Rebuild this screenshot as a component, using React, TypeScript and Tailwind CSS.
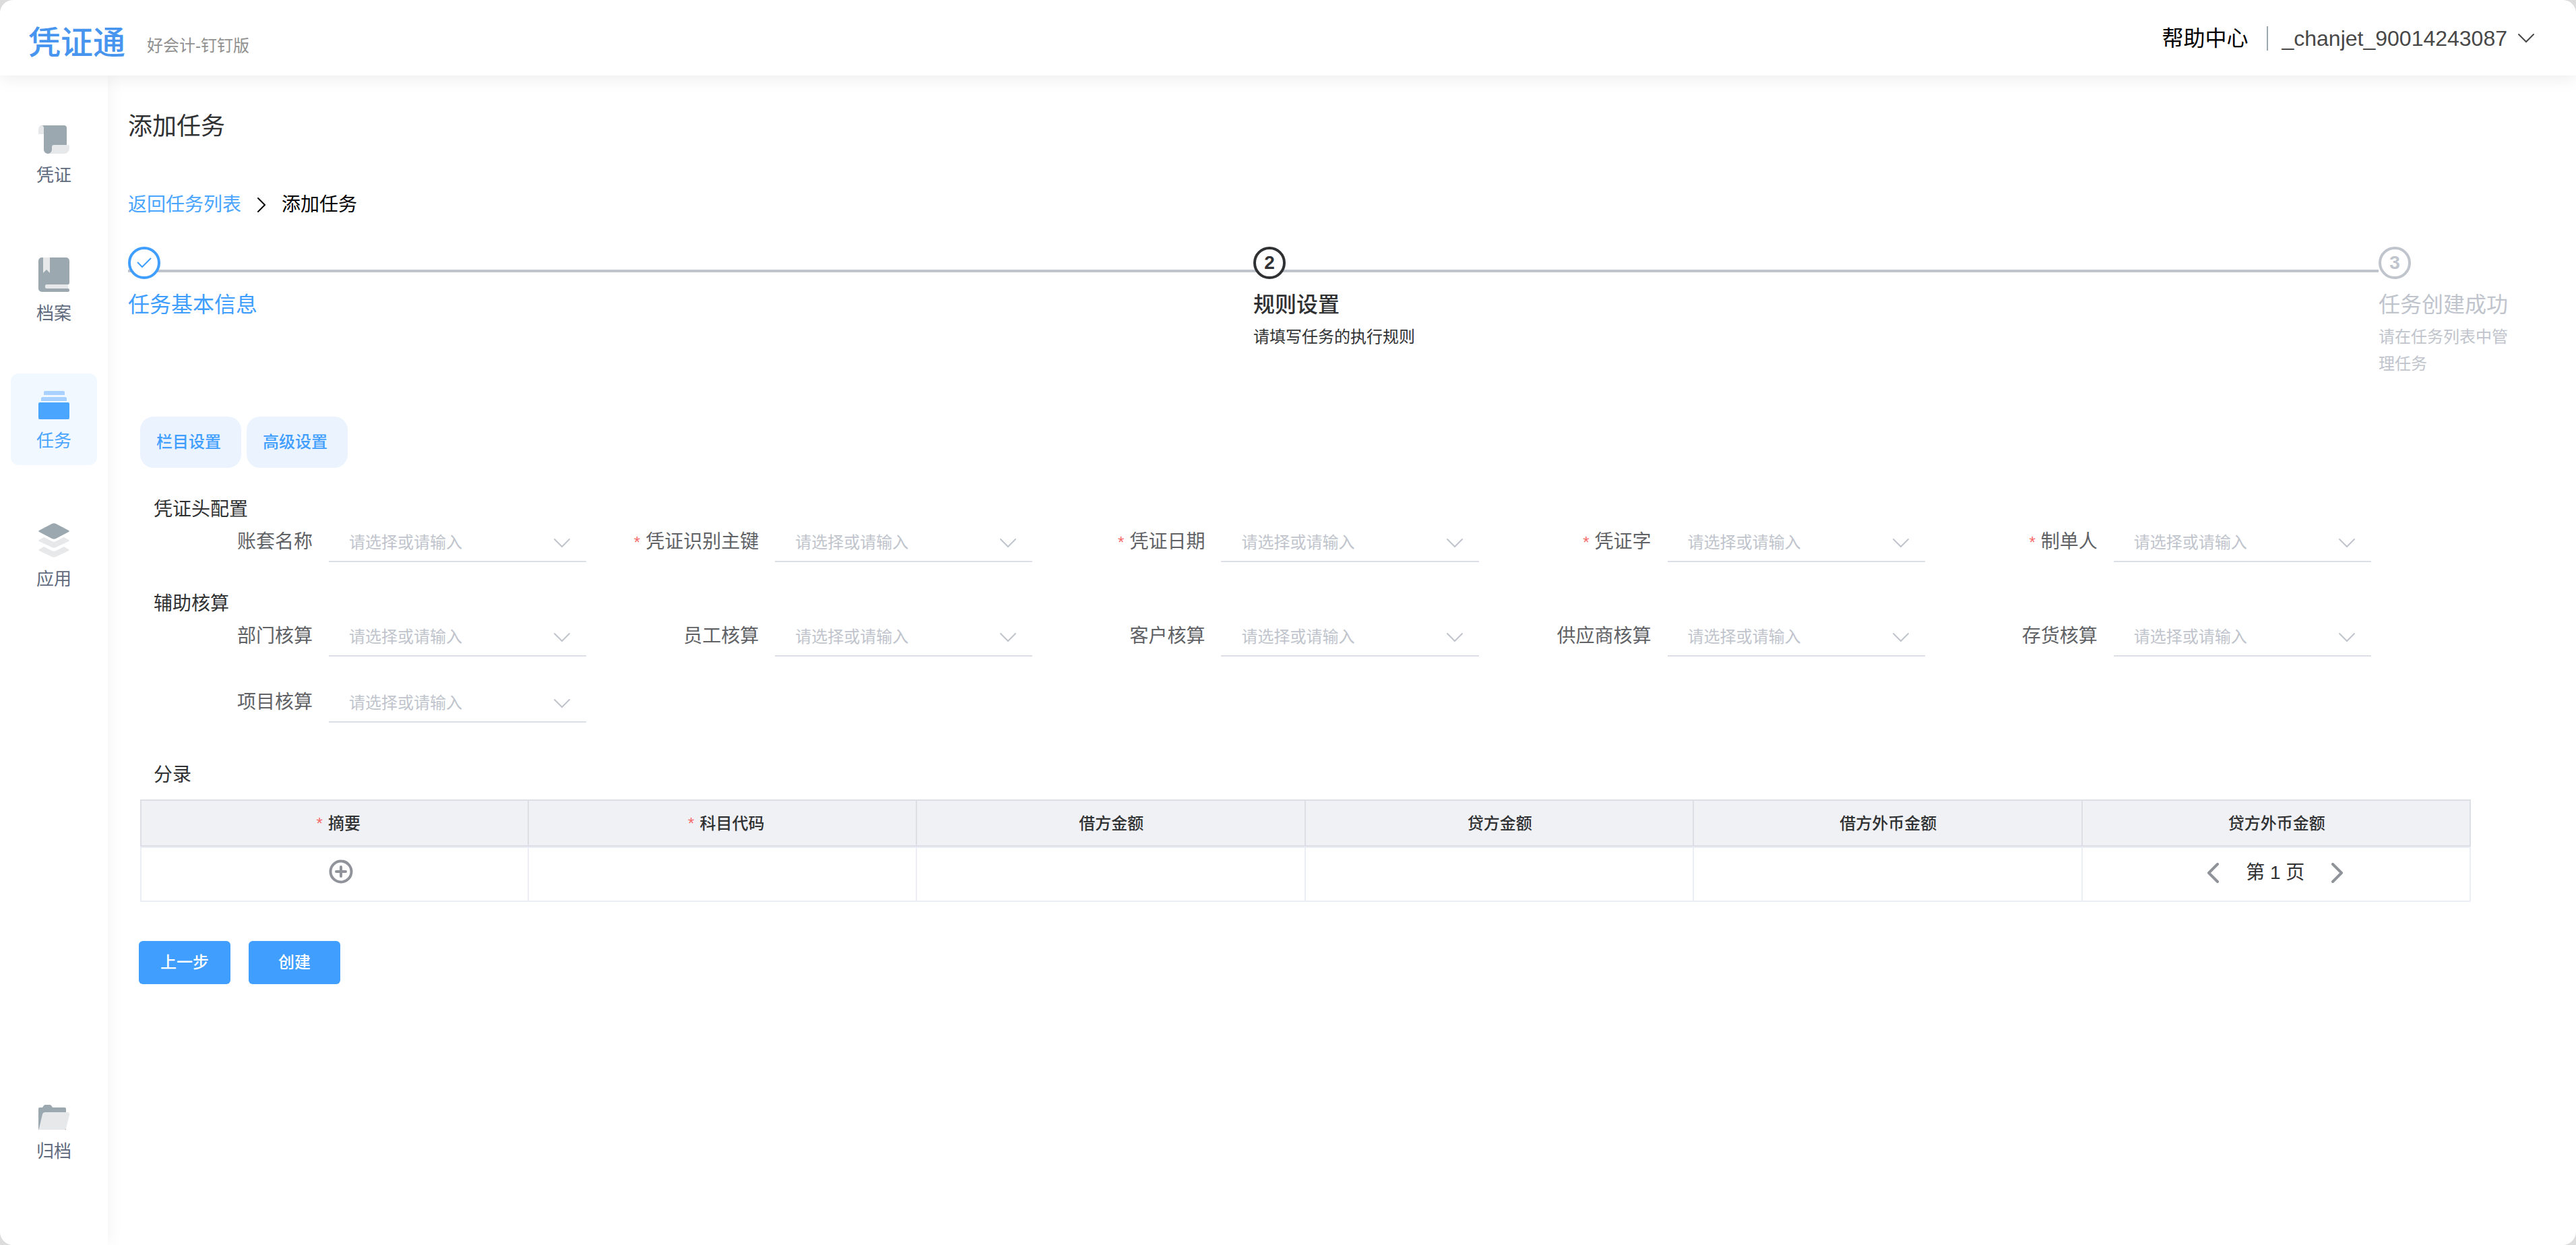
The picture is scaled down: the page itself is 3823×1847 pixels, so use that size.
import type { ReactNode } from 'react';

interface NavItemProps {
  label: string;
  icon: ReactNode;
  active?: boolean;
  className?: string;
}

interface Field {
  id: string;
  label: string;
  required?: boolean;
}

interface Step {
  title: string;
  description?: string;
  status: 'done' | 'current' | 'waiting';
}

const steps: Step[] = [
  { title: '任务基本信息', status: 'done' },
  { title: '规则设置', description: '请填写任务的执行规则', status: 'current' },
  { title: '任务创建成功', description: '请在任务列表中管理任务', status: 'waiting' },
];

const stepColors = {
  done: 'text-[#409eff]',
  current: 'text-[#303133]',
  waiting: 'text-[#c0c4cc]',
};

const headFields: Field[] = [
  { id: 'account', label: '账套名称' },
  { id: 'key', label: '凭证识别主键', required: true },
  { id: 'date', label: '凭证日期', required: true },
  { id: 'word', label: '凭证字', required: true },
  { id: 'maker', label: '制单人', required: true },
];

const auxFields: Field[] = [
  { id: 'department', label: '部门核算' },
  { id: 'employee', label: '员工核算' },
  { id: 'customer', label: '客户核算' },
  { id: 'supplier', label: '供应商核算' },
  { id: 'inventory', label: '存货核算' },
  { id: 'project', label: '项目核算' },
];

const columns = [
  { label: '摘要', required: true },
  { label: '科目代码', required: true },
  { label: '借方金额' },
  { label: '贷方金额' },
  { label: '借方外币金额' },
  { label: '贷方外币金额' },
];

const VoucherIcon = () => (
  <svg width="46" height="42" viewBox="0 0 46 42">
    <path d="M5 0h5v13H0V5a5 5 0 0 1 5-5z" fill="#e6e8ea" />
    <path d="M20 29h24a2 2 0 0 1 2 2v3a8 8 0 0 1-8 8H14z" fill="#e6e8ea" />
    <path d="M5 0h33a4 4 0 0 1 4 4v25H23a3 3 0 0 0-3 3v4a6 6 0 0 1-12 0V4a4 4 0 0 0-3-4z" fill="#9ba8b0" />
  </svg>
);

const ArchiveIcon = () => (
  <svg width="46" height="51" viewBox="0 0 46 51">
    <path
      d="M5 0h36a5 5 0 0 1 5 5v33a2 2 0 0 1-2 2v6a2 2 0 0 1 2 2v1a2 2 0 0 1-2 2H5a5 5 0 0 1-5-5V5a5 5 0 0 1 5-5z"
      fill="#9ba8b0"
    />
    <path d="M7 0h10v23l-5-5-5 5z" fill="#e6e8ea" />
    <path d="M12 40h32v6H12a2 2 0 0 1-2-2v-2a2 2 0 0 1 2-2z" fill="#e6e8ea" />
  </svg>
);

const TaskIcon = () => (
  <svg width="46" height="42" viewBox="0 0 46 42">
    <path d="M10 0h27a2 2 0 0 1 2 2v4H8V2a2 2 0 0 1 2-2z" fill="#a8d1ff" />
    <path d="M6 9h34a2 2 0 0 1 2 2v4H4v-4a2 2 0 0 1 2-2z" fill="#a8d1ff" />
    <rect y="17" width="46" height="25" rx="2" fill="#4aa5ff" />
  </svg>
);

const AppsIcon = () => (
  <svg width="46" height="51" viewBox="0 0 46 51">
    <path d="M20 1q3-1.500 6 0l19 10q1.500 1 0 2L26 23q-3 1.500-6 0L1 13q-1.500-1 0-2z" fill="#9ba8b0" />
    <path d="M8 21l12 6q3 1.500 6 0l12-6 7 4q1.500 1 0 2L26 36q-3 1.500-6 0L1 27q-1.500-1 0-2z" fill="#e6e8ea" />
    <path d="M8 35l12 6q3 1.500 6 0l12-6 7 4q1.500 1 0 2L26 50q-3 1.500-6 0L1 41q-1.500-1 0-2z" fill="#e6e8ea" />
  </svg>
);

const FolderIcon = () => (
  <svg width="46" height="37" viewBox="0 0 46 37">
    <path d="M2 4h4l2-3q1-1 2-1h7q1 0 2 1l2 3h18a2 2 0 0 1 2 2v31H0V6a2 2 0 0 1 2-2z" fill="#9ba8b0" />
    <path d="M10 11h33a3 3 0 0 1 3 4l-5 20a2 2 0 0 1-2 2H2a1 1 0 0 1-1-2l5-21q1-3 4-3z" fill="#e6e8ea" />
  </svg>
);

interface ChevronProps {
  direction: 'down' | 'right';
  className: string;
}

const chevronPaths = {
  down: 'M1 6l11 11L23 6',
  right: 'M7 2l10 10L7 22',
};

const Chevron = ({ direction, className }: ChevronProps) => (
  <svg
    viewBox="0 0 24 24"
    fill="none"
    stroke="currentColor"
    strokeWidth="2"
    strokeLinecap="round"
    className={className}
    aria-hidden="true"
  >
    <path d={chevronPaths[direction]} />
  </svg>
);

const PageArrow = ({ flip = false }: { flip?: boolean }) => (
  <svg
    width="18"
    height="30"
    viewBox="0 0 18 30"
    fill="none"
    stroke="#909399"
    strokeWidth="4"
    strokeLinecap="round"
    strokeLinejoin="round"
    aria-hidden="true"
  >
    <path d={flip ? 'M2 2l13 13L2 28' : 'M16 2L3 15l13 13'} />
  </svg>
);

const NavItem = ({ label, icon, active = false, className = '' }: NavItemProps) => (
  <a
    href="#"
    className={`flex h-[136px] w-32 flex-col items-center rounded-xl text-[26px] leading-8 ${
      active ? 'bg-[#f1f8ff] text-[#4aa5ff]' : 'text-[#606b7d]'
    } ${className}`}
  >
    <span className="mt-[17px] flex h-[51px] items-end">{icon}</span>
    <span className="mt-4">{label}</span>
  </a>
);

const SelectField = ({ id, label, required }: Field) => (
  <div className="flex h-16">
    <label
      htmlFor={id}
      className="w-[280px] shrink-0 pr-6 text-right text-[28px] leading-[68px] text-[#606266]"
    >
      {required && <span className="mr-2 text-2xl text-[#f56c6c]">*</span>}
      {label}
    </label>
    <div className="relative min-w-0 flex-1">
      <select
        id={id}
        className="h-16 w-full appearance-none border-b-2 border-[#dcdfe6] bg-transparent px-[30px] pt-2 text-2xl text-[#c0c4cc] outline-none"
      >
        <option>请选择或请输入</option>
      </select>
      <Chevron
        direction="down"
        className="pointer-events-none absolute top-6 right-6 size-6 text-[#c0c4cc]"
      />
    </div>
  </div>
);

const StepMark = ({ step, index }: { step: Step; index: number }) => (
  <span className="relative flex size-12 items-center justify-center rounded-full border-4 border-current bg-white text-[28px] leading-10 font-bold">
    {step.status === 'done' ? (
      <svg width="24" height="18" viewBox="0 0 24 18" fill="none" stroke="currentColor" strokeWidth="2">
        <path d="M2 8l7 7L22 2" />
      </svg>
    ) : (
      index + 1
    )}
  </span>
);

const Steps = () => (
  <ol className="mt-[42px] flex min-h-[194px]">
    {steps.map((step, index) => {
      const last = index === steps.length - 1;
      return (
        <li key={step.title} className={`${last ? 'w-48' : 'flex-1'} ${stepColors[step.status]}`}>
          <div className="relative">
            {!last && <div className="absolute top-[34px] left-0 h-1 w-full bg-[#c0c4cc]" />}
            <StepMark step={step} index={index} />
          </div>
          <div
            className={`mt-[18px] text-[32px] leading-10 ${step.status === 'current' ? 'font-medium' : ''}`}
          >
            {step.title}
          </div>
          {step.description && <p className="mt-2 text-2xl leading-10">{step.description}</p>}
        </li>
      );
    })}
  </ol>
);

const EntryTable = () => (
  <table className="mt-[22px] w-full table-fixed border-separate border-spacing-0">
    <thead>
      <tr>
        {columns.map((column) => (
          <th
            key={column.label}
            className={`h-[70px] border-y-2 border-r-2 border-[#dcdfe6] bg-[#f0f1f5] p-0 pt-0.5 text-2xl font-medium text-[#303133] first:border-l-2 ${
              column.required ? 'pl-3' : 'pl-0.5'
            }`}
          >
            {column.required && <span className="mr-2 text-[#f56c6c]">*</span>}
            {column.label}
          </th>
        ))}
      </tr>
    </thead>
    <tbody>
      <tr>
        {columns.map((column, index) => (
          <td
            key={column.label}
            className="h-[82px] border-y-2 border-r-2 border-[#ebeef5] p-0 first:border-l-2"
          >
            {index === 0 && (
              <div className="flex justify-center pb-2 pl-5">
                <button type="button" aria-label="添加">
                  <svg width="36" height="36" viewBox="0 0 36 36" fill="none" stroke="#909399" strokeWidth="4">
                    <circle cx="18" cy="18" r="15.500" />
                    <path d="M11 18h14M18 11v14" strokeLinecap="round" />
                  </svg>
                </button>
              </div>
            )}
            {index === columns.length - 1 && (
              <div className="flex items-center justify-center pr-0.5 pb-1 text-[28px] leading-8 text-[#303133]">
                <button type="button" aria-label="上一页">
                  <PageArrow />
                </button>
                <span className="mx-10">第 1 页</span>
                <button type="button" aria-label="下一页">
                  <PageArrow flip />
                </button>
              </div>
            )}
          </td>
        ))}
      </tr>
    </tbody>
  </table>
);

export default function App() {
  return (
    <div className="bg-[#dcdcdc] font-['Liberation_Sans','Noto_Sans_CJK_SC',sans-serif]">
      <div className="flex min-h-screen flex-col overflow-hidden rounded-[20px] bg-white">
        <header className="relative z-10 flex h-28 items-center justify-between bg-white pr-[62px] pl-[42px] shadow-[0_4px_24px_rgba(0,0,0,0.08)]">
          <div className="flex items-center">
            <span className="mt-4 text-5xl leading-14 font-medium text-[#4795ee]">凭证通</span>
            <span className="mt-6 ml-8 text-2xl leading-8 text-[#909090]">好会计-钉钉版</span>
          </div>
          <div className="flex items-center pt-0.5 text-[32px] leading-10">
            <a href="#" className="text-black">
              帮助中心
            </a>
            <span className="ml-7 h-9 w-0.5 bg-[#9ba8b0]" />
            <button type="button" className="ml-5 flex items-center text-[#484848]">
              _chanjet_90014243087
              <Chevron direction="down" className="ml-4 size-6" />
            </button>
          </div>
        </header>

        <div className="flex flex-1">
          <nav className="flex w-40 shrink-0 flex-col items-center bg-white pt-12 pb-[103px] shadow-[0_0_24px_rgba(0,0,0,0.06)]">
            <NavItem label="凭证" icon={<VoucherIcon />} />
            <NavItem label="档案" icon={<ArchiveIcon />} className="mt-[69px]" />
            <NavItem label="任务" icon={<TaskIcon />} active className="mt-[53px]" />
            <NavItem label="应用" icon={<AppsIcon />} className="mt-[69px]" />
            <NavItem label="归档" icon={<FolderIcon />} className="mt-auto" />
          </nav>

          <main className="min-w-0 flex-1 pt-[52px] pr-[101px] pl-[30px]">
            <h1 className="text-4xl leading-12 text-[#303133]">添加任务</h1>

            <div className="mt-[72px] flex items-center text-[28px] leading-10">
              <a href="#" className="text-[#4aa5ff]">
                返回任务列表
              </a>
              <Chevron direction="right" className="mx-[18px] size-6" />
              <span className="text-black">添加任务</span>
            </div>

            <Steps />

            <section className="mt-[58px] pr-[55px] pl-[18px] text-[#303133]">
              <div className="flex gap-2 text-2xl font-medium text-[#409eff]">
                <button type="button" className="h-[76px] rounded-[20px] bg-[#ebf3ff] pr-[30px] pl-6">
                  栏目设置
                </button>
                <button type="button" className="h-[76px] rounded-[20px] bg-[#ebf3ff] pr-[30px] pl-6">
                  高级设置
                </button>
              </div>

              <h2 className="mt-12 pl-5 text-[28px] leading-7">凭证头配置</h2>
              <div className="grid grid-cols-5 pr-[148px]">
                {headFields.map((field) => (
                  <SelectField key={field.id} {...field} />
                ))}
              </div>

              <h2 className="mt-12 pl-5 text-[28px] leading-7">辅助核算</h2>
              <div className="grid grid-cols-5 gap-y-[34px] pr-[148px]">
                {auxFields.map((field) => (
                  <SelectField key={field.id} {...field} />
                ))}
              </div>

              <h2 className="mt-16 pl-5 text-[28px] leading-7">分录</h2>
              <EntryTable />
            </section>

            <div className="mt-[58px] flex gap-[27px] pl-4 text-2xl font-medium text-white">
              <button type="button" className="h-16 w-[136px] rounded-md bg-[#409eff]">
                上一步
              </button>
              <button type="button" className="h-16 w-[136px] rounded-md bg-[#409eff]">
                创建
              </button>
            </div>
          </main>
        </div>
      </div>
    </div>
  );
}
